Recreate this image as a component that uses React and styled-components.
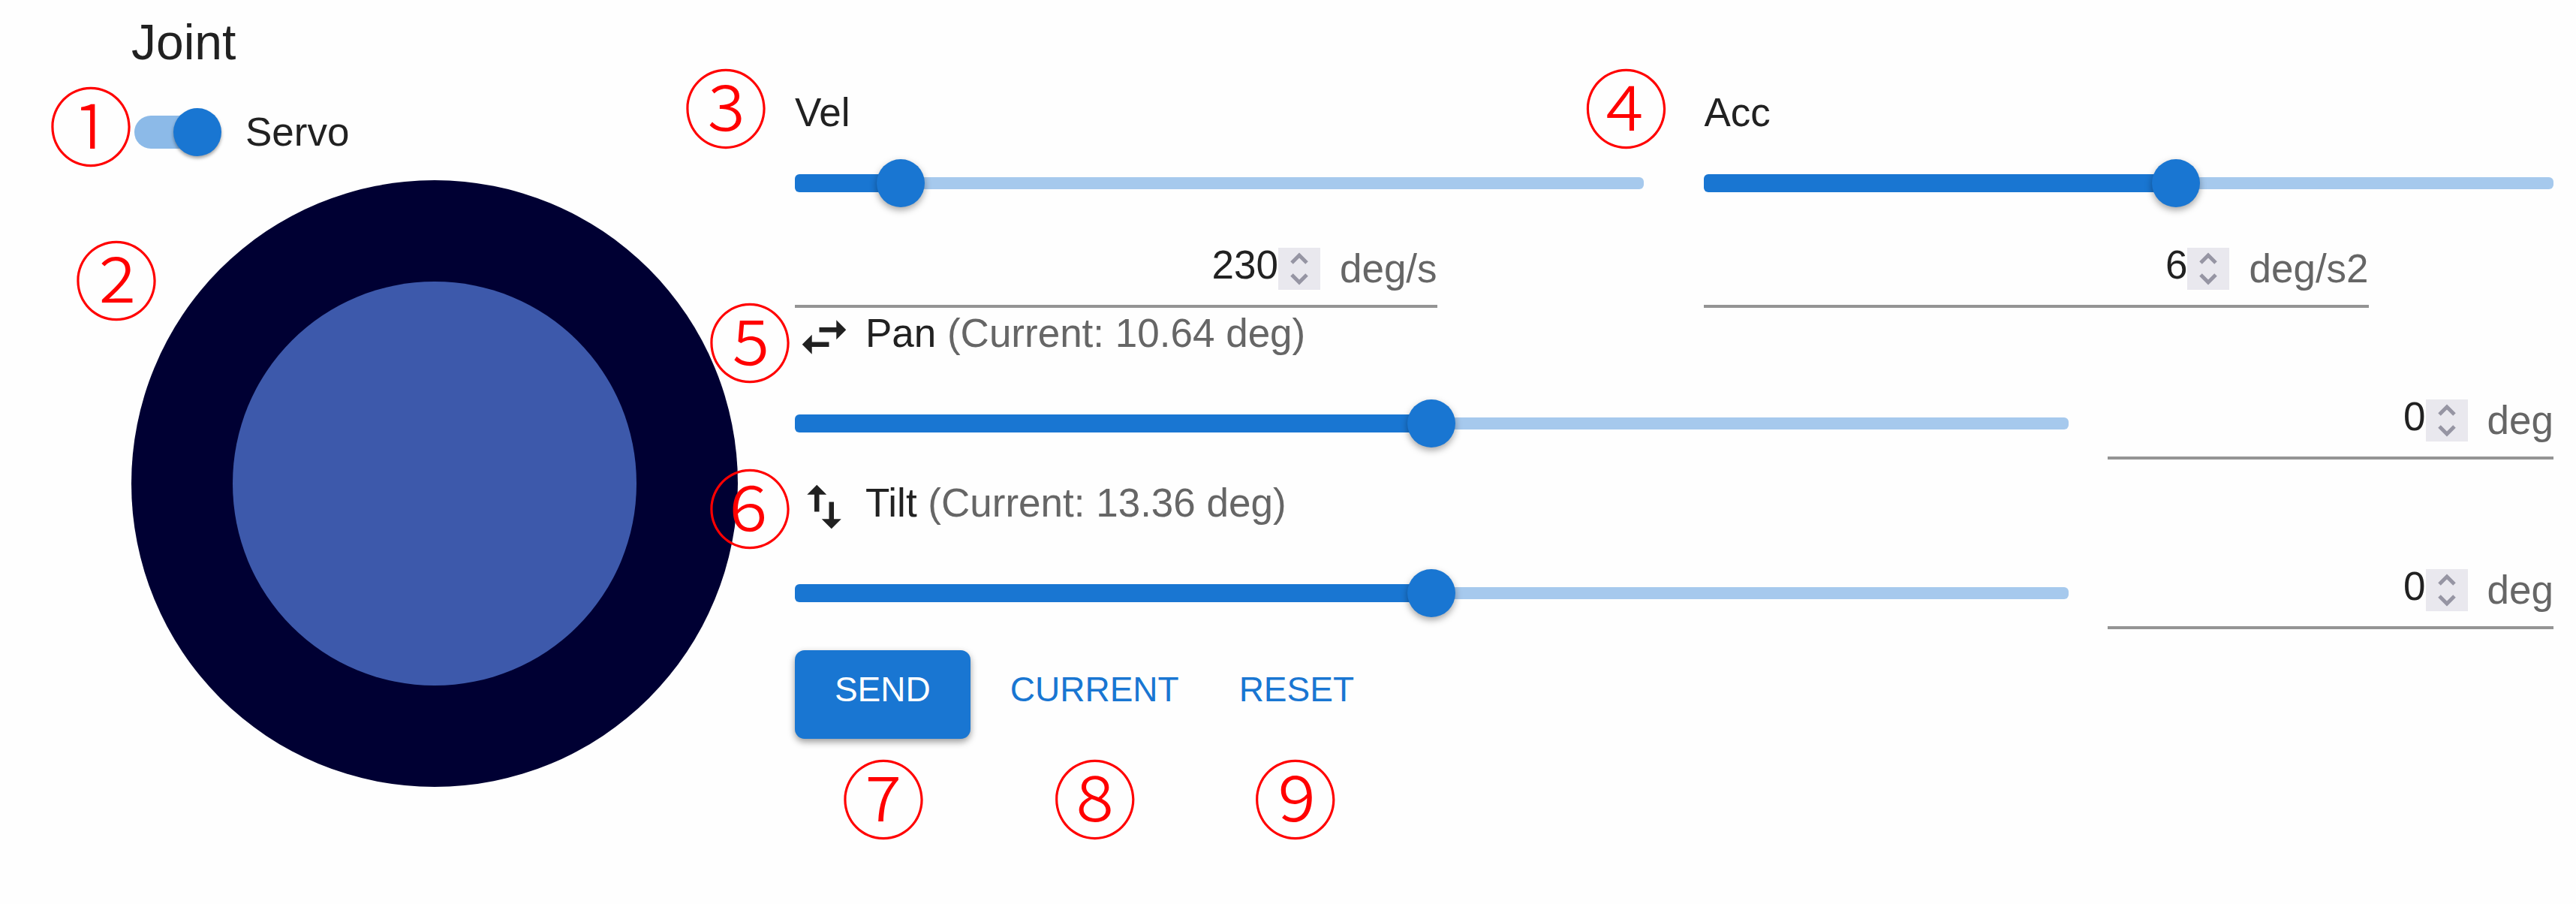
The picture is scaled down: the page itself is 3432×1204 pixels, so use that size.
import React, { useState } from 'react'
import styled, { createGlobalStyle } from "styled-components";
import { MdSwapHoriz, MdSwapVert } from "react-icons/md";

const GlobalStyle = createGlobalStyle`
* {
  box-sizing: border-box;
}

body {
  margin: 0;
  background: #fefefe;
  color: #212121;
  font-family: "Liberation Sans", Arial, sans-serif;
  font-size: 53px;
}
`;

function RangeSlider({ id, label, value, min, max, onChange }) {
    const percent = ((value - min) / (max - min)) * 100

    return (
        <SliderBox>
            <Rail />
            <Fill style={{ width: `${percent}%` }} />
            <SliderInput
                type="range"
                id={id}
                aria-label={label}
                min={min}
                max={max}
                value={value}
                onChange={(e) => onChange(Number(e.target.value))}
            />
        </SliderBox>
    )
}

function NumberField({ label, unit, value, min, max, onChange }) {
    const step = (diff) => onChange(Math.min(max, Math.max(min, value + diff)))

    return (
        <Field>
            <FieldInput
                type="number"
                aria-label={label}
                min={min}
                max={max}
                value={value}
                onChange={(e) => onChange(Number(e.target.value))}
            />
            <Spinner>
                <SpinButton type="button" aria-label="+" onClick={() => step(1)}>
                    <svg width="28" height="18" viewBox="0 0 28 18">
                        <path d="M4 15 14 5l10 10" />
                    </svg>
                </SpinButton>
                <SpinButton type="button" aria-label="-" onClick={() => step(-1)}>
                    <svg width="28" height="18" viewBox="0 0 28 18">
                        <path d="M4 3 14 13 24 3" />
                    </svg>
                </SpinButton>
            </Spinner>
            <Unit>{unit}</Unit>
        </Field>
    )
}

function App() {
    const [servo, setServo] = useState(true)
    const [vel, setVel] = useState(230)
    const [acc, setAcc] = useState(6)
    const [pan, setPan] = useState(0)
    const [tilt, setTilt] = useState(0)

    const reset = () => {
        setPan(0)
        setTilt(0)
    }

    return (
        <Page>
            <GlobalStyle />
            <Title>Joint</Title>
            <Columns>
                <div>
                    <ServoRow>
                        <Switch
                            type="checkbox"
                            id="servo"
                            checked={servo}
                            onChange={(e) => setServo(e.target.checked)}
                        />
                        <label htmlFor="servo">Servo</label>
                        <Marker $x={-54} $y={51}>①</Marker>
                    </ServoRow>
                    <Pad>
                        <Stick />
                        <Marker $x={-20} $y={128}>②</Marker>
                    </Pad>
                </div>

                <div>
                    <Params>
                        <Param>
                            <ParamLabel htmlFor="vel">Vel</ParamLabel>
                            <RangeSlider id="vel" value={vel} min={0} max={1840} onChange={setVel} />
                            <NumberField label="Vel" unit="deg/s" value={vel} min={0} max={1840} onChange={setVel} />
                            <Marker $x={-92} $y={27}>③</Marker>
                        </Param>
                        <Param>
                            <ParamLabel htmlFor="acc">Acc</ParamLabel>
                            <RangeSlider id="acc" value={acc} min={1} max={10} onChange={setAcc} />
                            <NumberField label="Acc" unit="deg/s2" value={acc} min={1} max={10} onChange={setAcc} />
                            <Marker $x={-104} $y={27}>④</Marker>
                        </Param>
                    </Params>

                    <Axis>
                        <AxisHeader htmlFor="pan">
                            <MdSwapHoriz />
                            <span>Pan <Current>(Current: 10.64 deg)</Current></span>
                        </AxisHeader>
                        <AxisControls>
                            <RangeSlider id="pan" value={pan} min={-180} max={180} onChange={setPan} />
                            <NumberField label="Pan" unit="deg" value={pan} min={-180} max={180} onChange={setPan} />
                        </AxisControls>
                        <Marker $x={-60} $y={41}>⑤</Marker>
                    </Axis>

                    <Axis>
                        <AxisHeader htmlFor="tilt">
                            <MdSwapVert />
                            <span>Tilt <Current>(Current: 13.36 deg)</Current></span>
                        </AxisHeader>
                        <AxisControls>
                            <RangeSlider id="tilt" value={tilt} min={-90} max={90} onChange={setTilt} />
                            <NumberField label="Tilt" unit="deg" value={tilt} min={-90} max={90} onChange={setTilt} />
                        </AxisControls>
                        <Marker $x={-60} $y={36}>⑥</Marker>
                    </Axis>

                    <Actions>
                        <Action>
                            <Button type="button" $primary>SEND</Button>
                            <Marker $x={118} $y={193}>⑦</Marker>
                        </Action>
                        <Action>
                            <Button type="button">CURRENT</Button>
                            <Marker $x={140} $y={193}>⑧</Marker>
                        </Action>
                        <Action>
                            <Button type="button" onClick={reset}>RESET</Button>
                            <Marker $x={102} $y={193}>⑨</Marker>
                        </Action>
                    </Actions>
                </div>
            </Columns>
        </Page>
    )
}

const Page = styled.main`
  padding: 0 30px 156px 175px;
`;

const Title = styled.h1`
  margin: 0;
  font-size: 66px;
  font-weight: normal;
  line-height: 112px;
`;

const Columns = styled.div`
  display: grid;
  grid-template-columns: minmax(0, 10fr) minmax(0, 29fr);
  column-gap: 76px;
`;

const Marker = styled.span`
  position: absolute;
  z-index: 1;
  left: ${(props) => props.$x}px;
  top: ${(props) => props.$y}px;
  transform: translate(-50%, -50%);
  color: #ff0000;
  font-family: "Noto Sans CJK JP", sans-serif;
  font-size: 114px;
  font-weight: 300;
  line-height: 112px;
  pointer-events: none;
`;

const ServoRow = styled.div`
  position: relative;
  display: flex;
  align-items: center;
  gap: 32px;
  padding: 32px 0 32px 4px;
  line-height: 58px;
`;

const Switch = styled.input`
  appearance: none;
  display: grid;
  align-items: center;
  width: 116px;
  height: 64px;
  margin: 0;
  cursor: pointer;

  &::before,
  &::after {
    content: "";
    grid-area: 1 / 1;
    border-radius: 32px;
  }

  &::before {
    width: 110px;
    height: 44px;
    background: #9e9e9e;
  }

  &::after {
    width: 64px;
    height: 64px;
    background: #fafafa;
    box-shadow: 0 3px 4px rgba(0, 0, 0, 0.35);
  }

  &:checked::before {
    background: #8cbae8;
  }

  &:checked::after {
    justify-self: end;
    background: #1976d2;
  }
`;

const Pad = styled.div`
  position: relative;
  display: grid;
  place-items: center;
  aspect-ratio: 1;
  border-radius: 50%;
  background: #000033;
`;

const Stick = styled.div`
  width: 66.5%;
  aspect-ratio: 1;
  border-radius: 50%;
  background: #3d59ab;
`;

const Params = styled.div`
  display: grid;
  grid-template-columns: 1fr 1fr;
  column-gap: 80px;
`;

const Param = styled.div`
  position: relative;
  display: flex;
  flex-direction: column;
  align-items: flex-start;
  gap: 8px;
`;

const ParamLabel = styled.label`
  line-height: 76px;
`;

const SliderBox = styled.div`
  display: grid;
  align-items: center;
  width: 100%;
  height: 96px;
`;

const Rail = styled.div`
  grid-area: 1 / 1;
  height: 16px;
  border-radius: 6px;
  background: #a6c9ed;
`;

const Fill = styled.div`
  grid-area: 1 / 1;
  height: 24px;
  border-radius: 6px;
  background: #1976d2;
`;

const SliderInput = styled.input`
  grid-area: 1 / 1;
  appearance: none;
  width: calc(100% + 64px);
  height: 64px;
  margin: 0 -32px;
  background: transparent;
  cursor: pointer;

  &::-webkit-slider-thumb {
    appearance: none;
    width: 64px;
    height: 64px;
    border-radius: 50%;
    background: #1976d2;
    box-shadow: 0 4px 10px rgba(0, 0, 0, 0.35);
  }
`;

const Field = styled.div`
  display: flex;
  align-items: center;
  height: 110px;
  padding-top: 10px;
  border-bottom: 4px solid #949494;
`;

const FieldInput = styled.input`
  flex: 1 1 644px;
  width: 644px;
  min-width: 0;
  height: 72px;
  padding: 0 0 12px;
  border: 0;
  outline: 0;
  background: transparent;
  color: inherit;
  font: inherit;
  text-align: right;
  appearance: textfield;

  &::-webkit-inner-spin-button,
  &::-webkit-outer-spin-button {
    appearance: none;
    margin: 0;
  }
`;

const Spinner = styled.div`
  display: flex;
  flex: none;
  flex-direction: column;
  width: 56px;
  height: 56px;
  background: #e9e8ee;
`;

const SpinButton = styled.button`
  display: flex;
  flex: 1;
  align-items: center;
  justify-content: center;
  padding: 0;
  border: 0;
  background: transparent;

  path {
    fill: none;
    stroke: #9695a3;
    stroke-width: 5;
  }
`;

const Unit = styled.span`
  margin-left: 26px;
  color: #666;
  line-height: 60px;
`;

const Axis = styled.section`
  position: relative;
  padding-bottom: 24px;
`;

const AxisHeader = styled.label`
  display: flex;
  gap: 16px;
  line-height: 68px;

  svg {
    width: 78px;
    height: 78px;
  }
`;

const Current = styled.span`
  color: #666;
`;

const AxisControls = styled.div`
  display: grid;
  grid-template-columns: minmax(0, 20fr) minmax(0, 7fr);
  column-gap: 52px;
  align-items: end;
  padding-top: 14px;
`;

const Actions = styled.div`
  display: flex;
  gap: 26px;
  padding-top: 4px;
`;

const Action = styled.div`
  position: relative;
`;

const Button = styled.button`
  height: 118px;
  padding: ${(props) => (props.$primary ? "0 53px 14px" : "0 27px 14px")};
  border: 0;
  border-radius: 13px;
  background: ${(props) => (props.$primary ? "#1976d2" : "transparent")};
  box-shadow: ${(props) => (props.$primary ? "0 4px 10px rgba(0, 0, 0, 0.4)" : "none")};
  color: ${(props) => (props.$primary ? "#fff" : "#1976d2")};
  font-family: inherit;
  font-size: 46px;
  cursor: pointer;
`;

export default App;
